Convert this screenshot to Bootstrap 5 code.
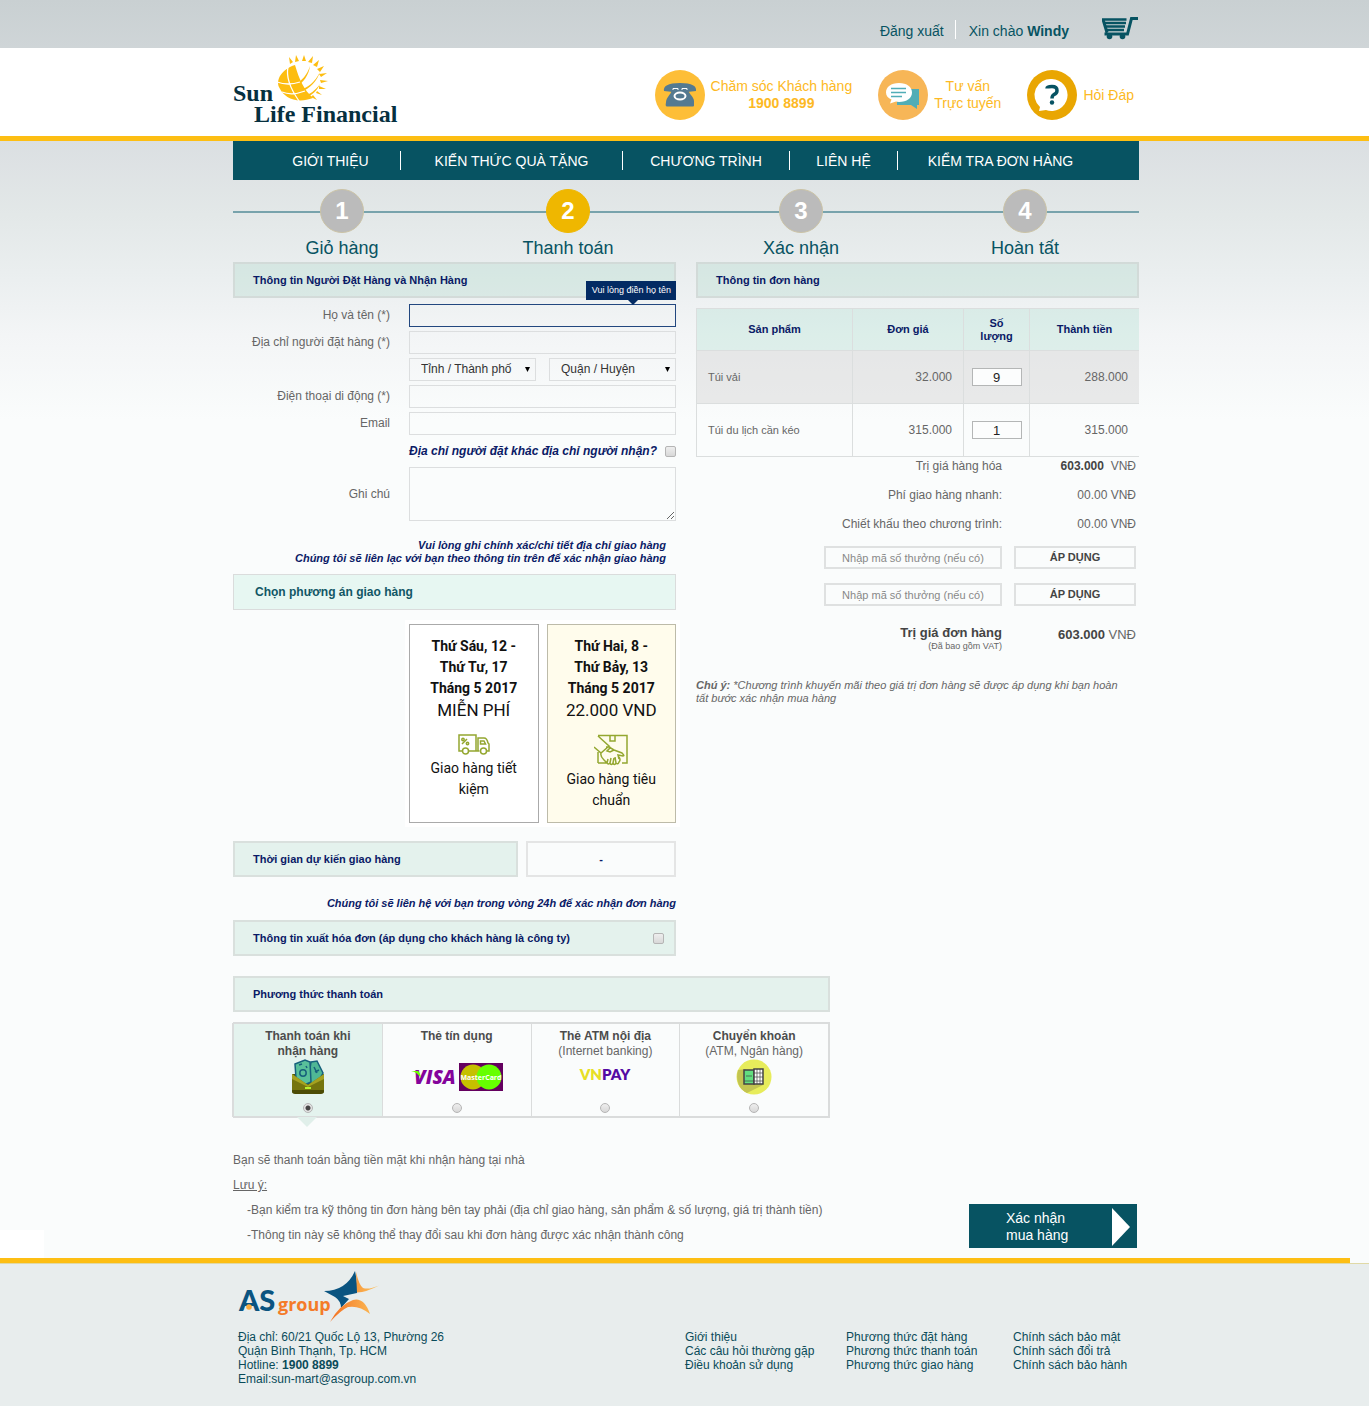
<!DOCTYPE html>
<html lang="vi">
<head>
<meta charset="utf-8">
<meta name="viewport" content="width=device-width, initial-scale=1">
<title>Sun Life Financial - Thanh toán</title>
<link href="https://cdn.jsdelivr.net/npm/bootstrap@5.3.0/dist/css/bootstrap.min.css" rel="stylesheet">
<style>
:root{--teal:#075362;--gold:#fdbe13;--navy:#0a1a66;--line:#dadcdc;--mint:rgba(128,202,174,.18)}
body{font-family:"Liberation Sans",Arial,sans-serif;font-size:12px;line-height:15px;color:#666;min-height:100vh;
 background:#fafcfc linear-gradient(#c9d0d2 0,#dbdfe2 141px,#e3e8e8 215px,#ebeff0 280px,#f3f5f6 335px,#fafcfc 420px) no-repeat}
a{color:inherit;text-decoration:none}
.wrap{width:100%;max-width:909px;margin:0 auto;padding-left:3px}
.topbar{min-height:48px;font-size:14px;color:var(--teal)}
.topbar .user-links{padding-top:20px}
.topbar .user-links a{line-height:16px;padding-top:3px}
.topbar .user-links a+a{border-left:1px solid #fff;margin-left:11px;padding-left:13px}
.cart-link{margin:16px 1px 0 33px}
.masthead{background:#fff;border-bottom:5px solid var(--gold)}
.masthead .wrap{min-height:88px}
.logo-name{font:700 24px "Liberation Serif",serif;fill:#06303f}
.contacts{font-size:14px;line-height:17px;color:#fdb924;text-align:center;padding:22px 5px 16px 0;column-gap:26px}
.contacts a{column-gap:6px}
.mainnav{display:grid;grid-template-columns:167fr 222fr 167fr 108fr 242fr;align-items:center;background:var(--teal);color:#fff;font-size:14px;min-height:39px}
.mainnav a{line-height:18px;padding-top:1px;text-align:center;white-space:nowrap}
.mainnav a+a{border-left:1px solid #fff}
.mainnav a:first-child{padding-left:28px}
.mainnav a:last-child{padding-right:36px}
.steps{display:grid;grid-template-columns:218fr 234fr 232fr 216fr 6px;padding:9px 0 2px;list-style:none;
 background:linear-gradient(#78a3ac,#78a3ac) 0 31px/100% 2px no-repeat;font-size:18px;line-height:24px;color:var(--teal);text-align:center}
.dot{width:44px;height:44px;border-radius:50%;background:#bbb;color:#fff;font-weight:700;font-size:24px;margin:0 auto 3px;border:1px solid #cbc3a6;line-height:42px}
.dot.now{background:#efb700;border-color:#efb700}
.cols{--bs-gutter-x:20px}
.bar{background:var(--mint);border:2px solid rgba(205,205,205,.5);min-height:36px;font-size:11px;font-weight:700;color:var(--navy);padding:0 10px 0 18px;margin:0;line-height:15px}
.bar-light{border-width:1px;border-color:var(--line);color:#125665;font-size:12px;padding-left:21px;background:rgba(128,220,190,.15)}
.eta{width:285px}
.eta-val{background:none}
.fields{display:grid;grid-template-columns:minmax(0,1fr) 267px;column-gap:19px;row-gap:4px;align-items:center;padding-top:6px}
.fields>label{text-align:right}
.box{border:1px solid #dcdedf;border-radius:0;background:transparent;height:23px;min-height:0;padding:0 11px;font-size:12px;line-height:21px;color:#333}
.box.need{border-color:#22477f}
.box:focus{box-shadow:none}
textarea.box{height:54px}
select.box{width:127px;appearance:none;background:url("data:image/svg+xml,%3Csvg xmlns='http://www.w3.org/2000/svg' viewBox='0 0 5 6'%3E%3Cpath d='M0 0h5L2.500 5z'/%3E%3C/svg%3E") right 5px center/5px 6px no-repeat}
.tip{position:absolute;right:0;bottom:27px;background:#032b63;color:#fff;font-size:9px;line-height:19px;padding:0 5px 0 6px;white-space:nowrap}
.tip:after{content:"";position:absolute;left:42px;top:19px;border:5px solid transparent;border-top-color:#032b63;border-bottom:0}
.tick{appearance:none;width:11px;height:11px;border:1px solid #b5b5b5;border-radius:2px;background:linear-gradient(#eee,#d8d8d8);margin:0;flex:none}
.tick[type=radio]{width:10px;height:10px;border-radius:50%}
.tick[type=radio]:checked{background:radial-gradient(#444 0 2px,#e4e4e4 3px)}
.says{font-size:11px;line-height:13px;font-weight:700;font-style:italic;color:var(--navy);text-align:right;margin:0}
.fs-other{font-size:12px;line-height:16px}
.note-a{padding:18px 10px 9px 0}
.note-b{padding:20px 0 10px}
.ships{width:275px;background:#fff;padding:4px;margin:10px -4px 14px auto;gap:8px}
.ship{flex:1 1 0;height:199px;border:1px solid #aaa;background:#fff;color:#111;font:14px/21px Roboto,sans-serif;padding:11px 8px 0}
.ship.alt{background:#fffcec;border-color:#bdbba9}
.ship .fee{font-size:17px;line-height:23px;display:block}
.ship svg{display:block;margin:12px auto 3px}
.otable{width:100%;margin-top:10px;table-layout:fixed;font-size:11px;line-height:13px}
.otable th{background:rgba(128,210,185,.2);color:var(--navy);text-align:center;height:42px;padding:0 12px}
.otable td{height:53px;padding:0 11px}
.otable th,.otable td{border:1px solid #dbdede;border-right:0}
.otable .num{text-align:right;font-size:12px}
.otable .alt td{background:rgba(215,215,215,.5)}
.otable td.q{padding:0;text-align:center}
.c1{width:156px}.c2{width:111px}.c3{width:66px}
.qty{width:50px;height:18px;border:1px solid #b4b6b6;background:#fcfdfd;text-align:center;font-size:13px;line-height:16px;padding:0;color:#222}
.sums{display:grid;grid-template-columns:minmax(0,1fr) 122px;column-gap:12px;row-gap:14px;padding:2px 3px 0 0;text-align:right}
.sums b{color:#444}
.code{border:2px solid #dfe1e1;background:transparent;height:23px;font-size:11px;line-height:15px;text-align:center;padding:0;border-radius:0;color:#777}
.code::placeholder{color:#888}
input.code{width:178px;justify-self:end}
button.code{font-weight:700;color:#444}
.grand{margin-top:5px}
.grand b{display:block;font-size:13px;line-height:15px}
.grand small{display:block;font-size:9px;line-height:12px}
.grand-v{margin-top:7px;font-size:13px}
.promo{margin:27px 0 0;font-size:11px;line-height:13px}
.pay-area{margin-top:20px}
.wide-bar,.pays{width:100%;max-width:597px}
.pays{border:2px solid var(--line);border-left:0;margin-top:10px;height:96px}
.pay{flex:1 1 0;text-align:center;position:relative;line-height:15px;padding-top:5px;border-left:1px solid var(--line)}
.pay b{color:#4c4c4c}
.pay svg{display:block;margin:0 auto}
.pay .tick{position:absolute;left:calc(50% - 5px);bottom:3px}
.pay.on{background:#e4f3ee;outline:1px solid var(--line)}
.pay.on:after{content:"";position:absolute;left:63px;top:93px;border:10px solid transparent;border-top-color:#e0efea;border-bottom:0}
.pay .cards-pic{margin-top:19px}
.pay .vn-pic{margin-top:7px}
.visa{font:italic 800 19px "Open Sans",sans-serif;fill:#84049b}
.mc{font:700 7px "Open Sans",sans-serif;fill:#fff}
.vnp{font:800 15px Lato,sans-serif}
.tail{margin-top:30px}
.tail p{margin:0;line-height:25px}
.tail .ind{padding-left:14px}
.buy{background:var(--teal);color:#fff;border:0;width:168px;height:44px;font-size:14px;line-height:17px;text-align:left;padding:2px 6px 0 37px;margin-right:2px}
.main-area{background:linear-gradient(#fff,#fff) 0 100%/44px 33px no-repeat;padding-bottom:15px}
.foot{background:#e8eded;color:#0a4b59;line-height:14px}
.foot:before{content:"";display:block;height:5px;margin-top:-5px;width:calc(100% - 19px);background:var(--gold)}
.foot-line{border-top:1px solid #e0d9a6}
.footcols{display:grid;grid-template-columns:447fr 161fr 167fr 126fr;padding:0 0 20px 5px}
.footcols a{display:block}
.footcols address{line-height:14px}
.as-link{padding:7px 0;height:66px}
.as-a{font:900 29px Lato,sans-serif;fill:#0a5480}
.as-g{font:700 18px "Open Sans",sans-serif;fill:#f47b29}
@media(max-width:767px){.mainnav,.footcols{display:block}.mainnav a{display:block;padding:6px;border:0}.masthead .wrap,.contacts,.tail{flex-wrap:wrap}}
</style>
</head>
<body class="d-flex flex-column">
<div class="topbar"><div class="wrap d-flex justify-content-end">
 <div class="user-links d-flex align-items-start"><a href="#">Đăng xuất</a><a href="#">Xin chào <b>Windy</b></a></div>
 <a class="cart-link" href="#" aria-label="Giỏ hàng"><svg width="36" height="24" viewBox="0 0 36 24" fill="none" stroke="#075362"><path d="M0 3.500h24.500M1.500 7H24M2.500 10.500H23M3.500 14H22" stroke-width="2.300"/><path d="M1 3.500l4 13M36 2.500h-6.500L25.500 18H2.500" stroke-width="3"/><g fill="#075362" stroke="none"><circle cx="7.500" cy="20.500" r="2.800"/><circle cx="20.500" cy="20.500" r="2.800"/></g></svg></a>
</div></div>

<header class="masthead"><div class="wrap d-flex justify-content-between">
 <a href="#" class="logo-link"><svg width="168" height="80" viewBox="0 0 168 80">
  <g fill="#fdbd10"><path d="M62 17C49 21 42 32 46.500 40C51 50 64 56 80 50C71 42 66 31 62 17Z"/>
  <path d="M63 39C70 35 76 27 77 18C74 27 69 33 62 36ZM67 44C77 41 84 33 87 24C82 34 75 40 66 42ZM73 50C79 47 84 43 87 36C82 43 77 46 71 48Z"/>
  <path transform="translate(0 1)" d="M57 15l-1-7 4 5zM62 13l1-7 3 6zM69 12l2-6 2 6zM75 13l5-6-1 7zM80 16l6-5-2 7zM84 20l7-3-4 6zM86 25l8-1-6 4zM87 31l8 1-7 2zM86 37l7 3-7 0zM84 42l5 4-6-2zM80 46l4 5-6-3z"/></g>
  <path d="M55 19Q52 33 66 53M44 34Q55 38 67 34M49 44Q59 48 72 43" fill="none" stroke="#fff" stroke-width="1.300"/>
  <text class="logo-name" x="0" y="53">Sun</text><text class="logo-name" x="21" y="74">Life Financial</text></svg></a>
 <div class="contacts d-flex align-items-center">
  <a href="#" class="d-flex align-items-center"><svg width="50" height="50" viewBox="0 0 50 50"><circle cx="25" cy="25" r="25" fill="#fdbe37"/><g fill="#547a91"><path d="M9 21c-1-5 4-8 16-8s17 3 16 8l-9 1c-1-1-1-4-2-4H20c-1 0-1 3-2 4z"/><path d="M17 20l2-3h12l2 3c1 4 6 7 6 11v4.500q0 1-1 1H12q-2 0-1-4c0-5 5-8 6-12.500z"/></g><g fill="none" stroke="#fff"><ellipse cx="25" cy="26" rx="5.500" ry="3.500" stroke-width="2"/><path d="M18 20v-1.500h5V20M27 20v-1.500h5V20"/></g></svg>
  <span>Chăm sóc Khách hàng<br><b>1900 8899</b></span></a>
  <a href="#" class="d-flex align-items-center"><svg width="50" height="50" viewBox="0 0 50 50"><circle cx="25" cy="25" r="25" fill="#f7b657"/><path d="M33 19h8v16h-2v4l-6-4H19v-3z" fill="#51adb6"/><path d="M21 13c8 0 13 4 13 9.500s-5 9.500-13 9.500l-3-.5-6 2 1.500-4C10 28 8 26 8 22.500 8 17 13 13 21 13z" fill="#fff"/><path d="M13 18.500h15M13 22.500h15M13 26.500h11" stroke="#51adb6" stroke-width="1.500"/></svg>
  <span>Tư vấn<br>Trực tuyến</span></a>
  <a href="#" class="d-flex align-items-center"><svg width="50" height="50" viewBox="0 0 50 50"><circle cx="25" cy="25" r="25" fill="#e9a602"/><path d="M25 9a16 16 0 1 1-6 31l-7 1 1-4A16 16 0 0 1 25 9z" fill="#fff"/><path d="M20 18.500q0-2 5-2 5 0 5 4 0 3-3 4-2 1-2 4" fill="none" stroke="#075362" stroke-width="3.500"/><circle cx="25" cy="32.500" r="2.200" fill="#075362"/></svg>
  <span>Hỏi Đáp</span></a>
 </div></div></header>

<div class="main-area">
<div class="wrap">
 <nav class="mainnav"><a href="#">GIỚI THIỆU</a><a href="#">KIẾN THỨC QUÀ TẶNG</a><a href="#">CHƯƠNG TRÌNH</a><a href="#">LIÊN HỆ</a><a href="#">KIỂM TRA ĐƠN HÀNG</a></nav>
 <ol class="steps mb-0"><li><div class="dot">1</div>Giỏ hàng</li><li><div class="dot now">2</div>Thanh toán</li><li><div class="dot">3</div>Xác nhận</li><li><div class="dot">4</div>Hoàn tất</li></ol>

 <div class="row cols">
  <section class="col-md-6">
   <h2 class="bar d-flex align-items-center">Thông tin Người Đặt Hàng và Nhận Hàng</h2>
   <div class="fields">
    <label for="name">Họ và tên (*)</label><div class="position-relative"><input id="name" class="form-control box need" aria-describedby="nametip"><div id="nametip" class="tip">Vui lòng điền họ tên</div></div>
    <label for="addr">Địa chỉ người đặt hàng (*)</label><input id="addr" class="form-control box">
    <span></span><div class="d-flex justify-content-between"><select class="box" aria-label="Tỉnh / Thành phố"><option>Tỉnh / Thành phố</option></select><select class="box" aria-label="Quận / Huyện"><option>Quận / Huyện</option></select></div>
    <label for="tel">Điện thoại di động (*)</label><input id="tel" type="tel" class="form-control box">
    <label for="mail">Email</label><input id="mail" type="email" class="form-control box">
   </div>
   <div class="says d-flex justify-content-end align-items-center gap-2 py-2"><label for="other" class="fs-other">Địa chỉ người đặt khác địa chỉ người nhận?</label><input id="other" type="checkbox" class="tick"></div>
   <div class="fields pt-0"><label for="note">Ghi chú</label><textarea id="note" class="form-control box"></textarea></div>
   <p class="says note-a">Vui lòng ghi chính xác/chi tiết địa chỉ giao hàng<br>Chúng tôi sẽ liên lạc với bạn theo thông tin trên để xác nhận giao hàng</p>
   <h2 class="bar bar-light d-flex align-items-center">Chọn phương án giao hàng</h2>
   <div class="ships d-flex">
    <button type="button" class="ship d-flex flex-column align-items-center"><b>Thứ Sáu, 12 -<br>Thứ Tư, 17<br>Tháng 5 2017</b><span class="fee">MIỄN PHÍ</span>
     <svg width="32" height="21" viewBox="0 0 32 21" fill="none" stroke="#94a730" stroke-width="1.500"><path d="M4 17H1V1h17v16h-7M18 17h3.500M20 17V4h6q3 0 4 5l1 1v7h-2M22.500 10V7h3.500l1.500 3zM9 5l-5 5"/><circle cx="7.500" cy="17" r="3"/><circle cx="25.500" cy="17" r="3"/><circle cx="5" cy="5.500" r="1.200"/><circle cx="9.500" cy="9.500" r="1.200"/></svg>
     <span>Giao hàng tiết kiệm</span></button>
    <button type="button" class="ship alt d-flex flex-column align-items-center"><b>Thứ Hai, 8 -<br>Thứ Bảy, 13<br>Tháng 5 2017</b><span class="fee">22.000 VND</span>
     <svg width="34" height="32" viewBox="0 0 34 32" fill="none" stroke="#94a730" stroke-width="1.500"><path d="M4 1.500h29V29h-5M4 29h9M4 29V18M4 2l11 10-8 7-7-6M16 2v5h5V2M15 13l5 3 8 3q3 3 1 3l-5-1 1 4M7 19q-1 3 3 7l3 3q1 2 3 0 1 3 3 0 1 3 3 0 2 2 3-1 2-2 0-5M13 29l1-4M16 29l1-5M19 29l1-5M22 29l-1-6M15 13h-3M20 16l-4 2-3-1 4-4"/></svg>
     <span>Giao hàng tiêu chuẩn</span></button>
   </div>
   <div class="d-flex gap-2"><h2 class="bar d-flex align-items-center eta">Thời gian dự kiến giao hàng</h2><div class="bar eta-val d-flex align-items-center justify-content-center p-0 flex-grow-1">-</div></div>
   <p class="says note-b">Chúng tôi sẽ liên hệ với bạn trong vòng 24h để xác nhận đơn hàng</p>
   <div class="bar d-flex align-items-center justify-content-between"><label for="inv">Thông tin xuất hóa đơn (áp dụng cho khách hàng là công ty)</label><input id="inv" type="checkbox" class="tick"></div>
  </section>

  <section class="col-md-6">
   <h2 class="bar d-flex align-items-center">Thông tin đơn hàng</h2>
   <table class="otable"><colgroup><col class="c1"><col class="c2"><col class="c3"><col class="c4"></colgroup>
    <thead><tr><th>Sản phẩm</th><th>Đơn giá</th><th>Số lượng</th><th>Thành tiền</th></tr></thead>
    <tbody><tr class="alt"><td>Túi vải</td><td class="num">32.000</td><td class="q"><input class="qty" value="9" aria-label="Số lượng Túi vải"></td><td class="num">288.000</td></tr>
    <tr><td>Túi du lịch cần kéo</td><td class="num">315.000</td><td class="q"><input class="qty" value="1" aria-label="Số lượng Túi du lịch cần kéo"></td><td class="num">315.000</td></tr></tbody></table>
   <div class="sums">
    <span>Trị giá hàng hóa</span><span><b>603.000</b>&nbsp; VNĐ</span>
    <span>Phí giao hàng nhanh:</span><span>00.00 VNĐ</span>
    <span>Chiết khấu theo chương trình:</span><span>00.00 VNĐ</span>
    <input class="code" placeholder="Nhập mã số thưởng (nếu có)" aria-label="Mã số thưởng 1"><button type="button" class="code">ÁP DỤNG</button>
    <input class="code" placeholder="Nhập mã số thưởng (nếu có)" aria-label="Mã số thưởng 2"><button type="button" class="code">ÁP DỤNG</button>
    <span class="grand"><b>Trị giá đơn hàng</b><small>(Đã bao gồm VAT)</small></span><span class="grand-v"><b>603.000</b> VNĐ</span>
   </div>
   <p class="fst-italic promo"><b>Chú ý:</b> *Chương trình khuyến mãi theo giá trị đơn hàng sẽ được áp dụng khi bạn hoàn<br>tất bước xác nhận mua hàng</p>
  </section>
 </div>

 <section class="pay-area">
  <h2 class="bar wide-bar d-flex align-items-center">Phương thức thanh toán</h2>
  <div class="pays d-flex">
   <label class="pay on"><b>Thanh toán khi<br>nhận hàng</b>
    <svg width="34" height="36" viewBox="0 0 34 36"><path d="M1 15h32v17q0 2-2 2H3q-2 0-2-2z" fill="#4f5a10"/><g stroke="#17617c" stroke-width="1.500"><path d="M20 3l6-1 6 12-7 13-8-4z" fill="#4fb795"/><path d="M4 5l10-4 5 2 1 20-9 4-6-8z" fill="#59c09a"/></g><g fill="none" stroke="#17617c" stroke-width="1.500"><circle cx="12" cy="14" r="3.200"/><path d="M8 6l3-1M23 8l3 6M24 13l4-2M15 7l1 2"/></g><path d="M1 15l16 11 16-11v17q0 2-2 2H3q-2 0-2-2z" fill="#75750e"/><path d="M1 15l16 11 16-11v5L17 28 1 20z" fill="#a5a11f"/><path d="M1 31h32v1q0 3-3 3H4q-3 0-3-3z" fill="#4c4b05"/><path d="M14 29h6" stroke="#b8f02c" stroke-width="2"/></svg>
    <input type="radio" class="tick" name="pay" checked></label>
   <label class="pay"><b>Thẻ tín dụng</b>
    <svg class="cards-pic" width="92" height="28" viewBox="0 0 92 28"><text class="visa" x="3" y="21">VISA</text><path d="M0 8h7q2 1 3 7Q6 9 0 8z" fill="#6dff00"/><path d="M48 0h44v28H48z" fill="#64005f"/><circle cx="62" cy="14" r="12.500" fill="#c5c000"/><circle cx="78" cy="14" r="12.500" fill="#66ff00"/><text class="mc" x="70" y="17" text-anchor="middle">MasterCard</text></svg>
    <input type="radio" class="tick" name="pay"></label>
   <label class="pay"><b>Thẻ ATM nội địa</b><br>(Internet banking)
    <svg class="vn-pic" width="52" height="18" viewBox="0 0 52 18"><text class="vnp" x="26" y="14" text-anchor="middle"><tspan fill="#e7df25">VN</tspan><tspan fill="#540ba4">PAY</tspan></text></svg>
    <input type="radio" class="tick" name="pay"></label>
   <label class="pay"><b>Chuyển khoản</b><br>(ATM, Ngân hàng)
    <svg width="36" height="36" viewBox="0 0 36 36"><circle cx="18" cy="18" r="17.500" fill="#e7ec5b"/><path d="M2 11l7-1 18 16-16 8C4 31-1 22 2 11z" fill="#c3c451"/><path d="M8 11h10v14H8z" fill="#62df80" stroke="#444" stroke-width="1.500"/><path d="M18 10h9v15h-9z" fill="#fff" stroke="#444" stroke-width="1.500"/><path d="M21 10v15M24 10v15M18 14h9M18 18h9M18 22h9M8 22h10M10 17h6" stroke="#444" stroke-width=".7"/></svg>
    <input type="radio" class="tick" name="pay"></label>
  </div>
  <div class="tail d-flex align-items-end justify-content-between">
   <div><p>Bạn sẽ thanh toán bằng tiền mặt khi nhận hàng tại nhà</p><p><u>Lưu ý:</u></p><p class="ind">-Bạn kiểm tra kỹ thông tin đơn hàng bên tay phải (địa chỉ giao hàng, sản phẩm &amp; số lượng, giá trị thành tiền)</p><p class="ind">-Thông tin này sẽ không thể thay đổi sau khi đơn hàng được xác nhận thành công</p></div>
   <button type="button" class="buy d-flex align-items-center justify-content-between"><span>Xác nhận<br>mua hàng</span><svg width="20" height="38" viewBox="0 0 20 38"><path d="M1 0l18 19L1 38z" fill="#fff"/></svg></button>
  </div>
 </section>
</div></div>

<footer class="foot flex-grow-1">
 <div class="foot-line"></div>
 <div class="wrap">
  <a href="#" class="as-link d-block"><svg width="150" height="52" viewBox="0 0 150 52"><text class="as-a" x="6" y="40">AS</text><circle cx="16" cy="36" r="2.800" fill="#f9ab3c"/><text class="as-g" x="45" y="40">group</text><defs><linearGradient id="og" x1="0" x2="1"><stop offset="0" stop-color="#f37021"/><stop offset="1" stop-color="#fcc35c"/></linearGradient></defs><path d="M122 0Q125 14 124 22L110 25 116 28 108 37Q108 30 102 26L91 20Q113 20 122 0Z" fill="#0a5480"/><path d="M123 1Q126 14 130 17 136 19 146 14.500 134 21 124 21.500zM97 51Q106 34 120 29 131 26 137 43 126 34 115 36 108 39 97 51z" fill="url(#og)"/></svg></a>
  <div class="footcols"><address class="mb-0">Địa chỉ: 60/21 Quốc Lộ 13, Phường 26<br>Quận Bình Thạnh, Tp. HCM<br>Hotline: <b>1900 8899</b><br>Email:sun-mart@asgroup.com.vn</address>
   <div><a href="#">Giới thiệu</a><a href="#">Các câu hỏi thường gặp</a><a href="#">Điều khoản sử dụng</a></div>
   <div><a href="#">Phương thức đặt hàng</a><a href="#">Phương thức thanh toán</a><a href="#">Phương thức giao hàng</a></div>
   <div><a href="#">Chính sách bảo mật</a><a href="#">Chính sách đổi trả</a><a href="#">Chính sách bảo hành</a></div></div>
 </div>
</footer>
<script src="https://cdn.jsdelivr.net/npm/bootstrap@5.3.0/dist/js/bootstrap.bundle.min.js"></script>
</body>
</html>
